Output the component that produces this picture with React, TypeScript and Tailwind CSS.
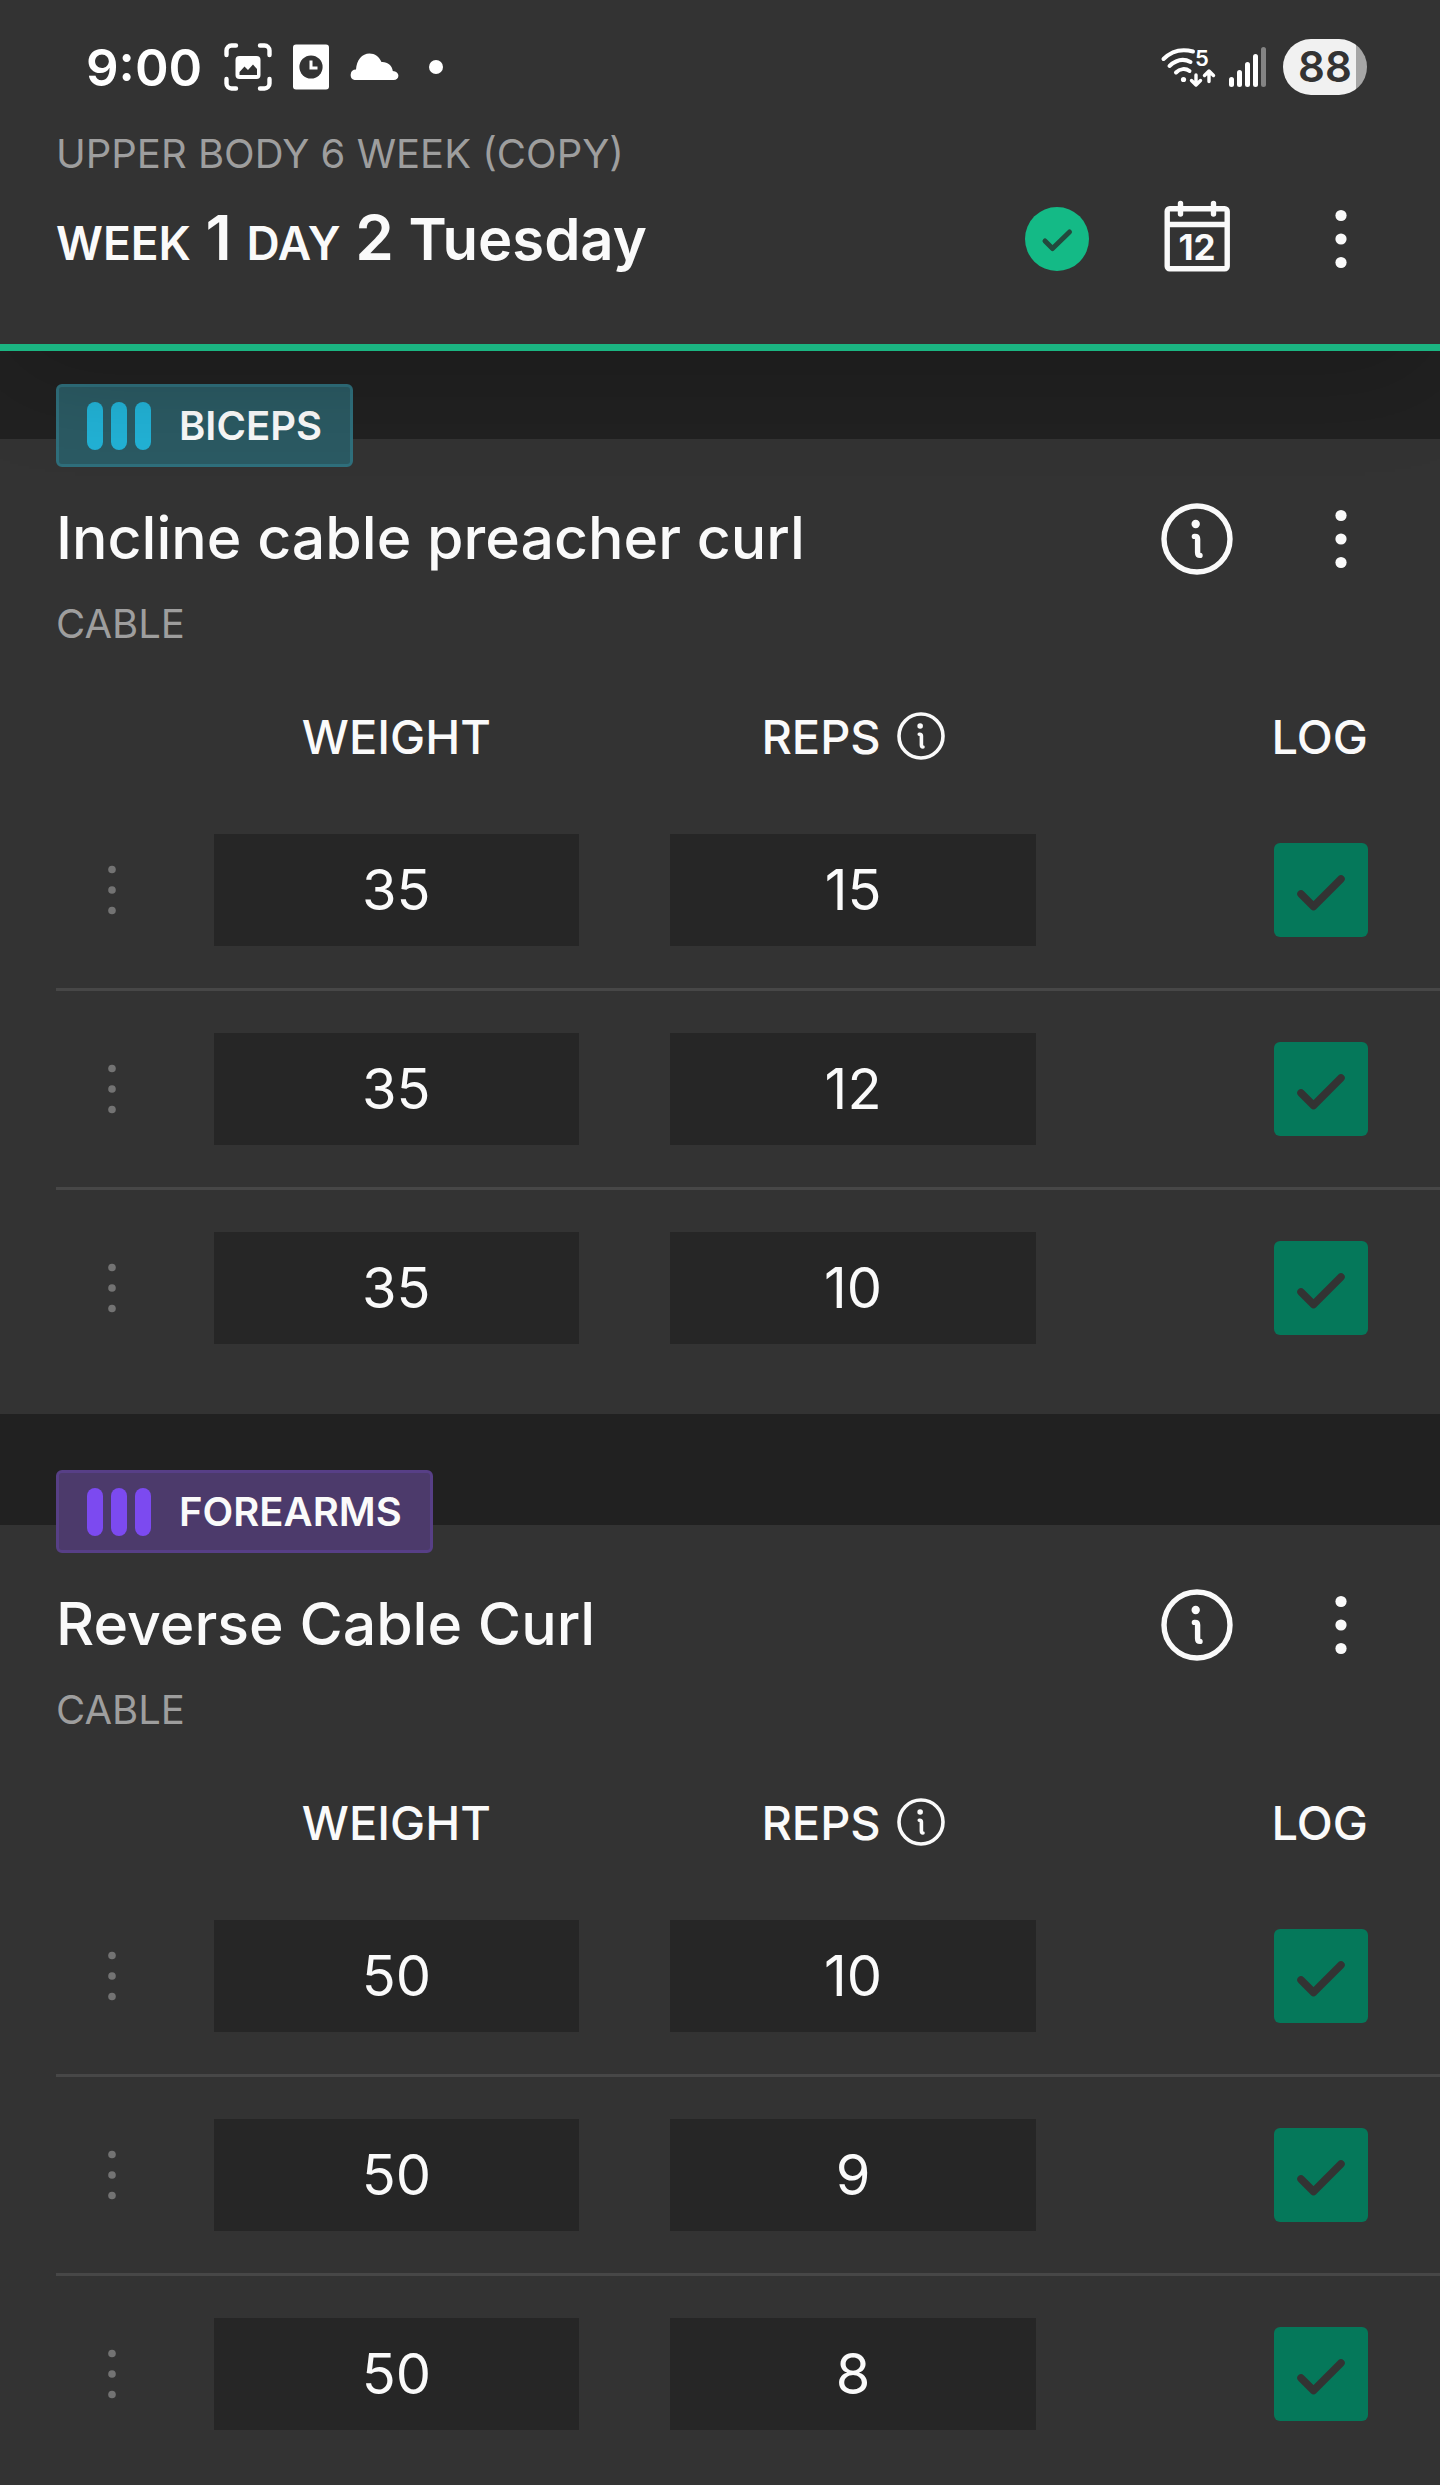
import { useState } from "react";

type SetEntry = { weight: string; reps: string };

type Exercise = {
  muscle: string;
  name: string;
  equipment: string;
  badge: string;
  bar: string;
  sets: SetEntry[];
};

const exercises: Exercise[] = [
  {
    muscle: "Biceps",
    name: "Incline cable preacher curl",
    equipment: "Cable",
    badge: "border-[#2f6f7c] bg-[#2b5a63]",
    bar: "bg-[#22b2d6]",
    sets: [
      { weight: "35", reps: "15" },
      { weight: "35", reps: "12" },
      { weight: "35", reps: "10" },
    ],
  },
  {
    muscle: "Forearms",
    name: "Reverse Cable Curl",
    equipment: "Cable",
    badge: "border-[#573f86] bg-[#4c3a6b]",
    bar: "bg-[#7c4af0]",
    sets: [
      { weight: "50", reps: "10" },
      { weight: "50", reps: "9" },
      { weight: "50", reps: "8" },
    ],
  },
];

const KebabIcon = ({ className = "" }: { className?: string }) => (
  <svg viewBox="0 0 72 72" fill="currentColor" className={className} aria-hidden="true">
    <circle cx="36" cy="12.5" r="5.6" />
    <circle cx="36" cy="36" r="5.6" />
    <circle cx="36" cy="59.5" r="5.6" />
  </svg>
);

const HandleIcon = () => (
  <svg viewBox="0 0 56 56" fill="currentColor" className="size-14" aria-hidden="true">
    <circle cx="28" cy="7.5" r="3.8" />
    <circle cx="28" cy="28" r="3.8" />
    <circle cx="28" cy="48.5" r="3.8" />
  </svg>
);

const InfoIcon = ({ className = "" }: { className?: string }) => (
  <svg viewBox="0 0 72 72" fill="none" stroke="currentColor" strokeLinecap="round" strokeLinejoin="round" className={className} aria-hidden="true">
    <circle cx="36" cy="36" r="33" strokeWidth="5.4" />
    <circle cx="34.7" cy="21" r="4.2" fill="currentColor" stroke="none" />
    <path d="M33.4 33.4h.6c1.6 0 2.6 1 2.6 2.6v13.6c0 1.8 1 2.8 2.4 2.8" strokeWidth="5.4" />
  </svg>
);

const StatusBar = () => (
  <div className="flex h-[134px] items-center justify-between pl-[86px] pr-[73px] text-white">
    <div className="flex items-center">
      <span className="text-[51px] leading-none font-semibold">9:00</span>
      <svg viewBox="0 0 48 48" className="ml-[22px] size-12" fill="none" aria-hidden="true">
        <path
          d="M2.5 12V7.5a5 5 0 0 1 5-5H12M36 2.5h4.5a5 5 0 0 1 5 5V12M45.5 36v4.5a5 5 0 0 1-5 5H36M12 45.5H7.5a5 5 0 0 1-5-5V36"
          stroke="currentColor"
          strokeWidth="4.4"
          strokeLinecap="round"
        />
        <rect x="11.5" y="13" width="25" height="23" rx="4" fill="currentColor" />
        <path d="M15.5 32v-3l5-5.5 3.5 3.5 5-5.5 4 4.5v6z" fill="#333333" />
      </svg>
      <svg viewBox="0 0 36 46" className="ml-[21px] h-[46px] w-9" aria-hidden="true">
        <rect width="36" height="45" y=".5" rx="3" fill="currentColor" />
        <circle cx="18" cy="23" r="11.6" fill="#333333" />
        <path d="M18 16.5V24h6.5" fill="none" stroke="currentColor" strokeWidth="3" />
      </svg>
      <svg viewBox="0 0 50 28" className="ml-5 h-7 w-[50px]" fill="currentColor" aria-hidden="true">
        <path d="M5.5 27a5.3 5.3 0 0 1 1.5-10.4C7.6 7 13 .5 20.5.5c5.4 0 9.8 3.2 12 8.6 6-.4 10.5 3.4 11.3 9 3.4.3 5.6 2.2 5.6 4.7 0 2.6-2 4.2-4.6 4.2z" />
      </svg>
      <span className="ml-[30px] size-[14px] rounded-full bg-white" />
    </div>
    <div className="flex items-center">
      <svg viewBox="0 0 56 42" className="h-[42px] w-14 overflow-visible" fill="none" stroke="currentColor" strokeWidth="4" strokeLinecap="round" strokeLinejoin="round" aria-hidden="true">
        <path d="M2.5 13C11 4.5 22 2.8 32 5.5" />
        <path d="M8.5 20c7-6.5 14.5-7.5 21-4" />
        <path d="M15 26.5c4-4 9.5-4.5 13.5-1.5" />
        <circle cx="22.5" cy="33.5" r="2.6" fill="currentColor" stroke="none" />
        <path d="M35 29v9.5m-4.5-4 4.5 4.5 4.5-4.5M48 35.5V26m-4.5 3.5L48 25l4.5 4.5" strokeWidth="3.4" />
        <text x="34" y="20" fontSize="22" fontWeight="600" fill="currentColor" stroke="none">
          5
        </text>
      </svg>
      <svg viewBox="0 0 38 42" className="ml-3 h-[42px] w-[38px]" fill="currentColor" aria-hidden="true">
        <rect x="0" y="31" width="5" height="10" rx="2.5" />
        <rect x="8" y="24" width="5" height="17" rx="2.5" />
        <rect x="16" y="16" width="5" height="25" rx="2.5" />
        <rect x="24" y="8" width="5" height="33" rx="2.5" />
        <rect x="32" y="1" width="5" height="40" rx="2.5" opacity=".4" />
      </svg>
      <span className="ml-4 flex h-14 w-[84px] items-center justify-center rounded-full bg-linear-to-r from-[#f1f1f1] from-87% to-[#a6a6a6] to-87% text-[42px] leading-none font-semibold text-[#333333]">
        88
      </span>
    </div>
  </div>
);

const Header = () => (
  <header className="relative z-10 border-b-[7px] border-[#1bb582] bg-[#333333] shadow-[0_30px_100px_-10px_rgba(0,0,0,0.2)]">
    <StatusBar />
    <div className="pb-[67px] pl-14 pr-[63px]">
      <p className="text-[40px] leading-[40px] text-[#9e9e9e] uppercase">Upper body 6 week (copy)</p>
      <div className="mt-[26px] flex h-[77px] items-center justify-between">
        <h1 className="pt-1 text-[58px] leading-[77px] font-semibold whitespace-nowrap text-[#fafafa]">
          <span className="text-[46px]">WEEK</span> <span className="text-[62px]">1</span>{" "}
          <span className="text-[46px]">DAY</span> <span className="text-[62px]">2</span> Tuesday
        </h1>
        <div className="flex items-center gap-[72px] text-[#fafafa]">
          <button aria-label="Workout complete" className="size-16 rounded-full bg-[#14ba86]">
            <svg viewBox="0 0 64 64" className="size-16" fill="none" stroke="#234a3d" strokeWidth="5" strokeLinecap="round" strokeLinejoin="round" aria-hidden="true">
              <path d="m20 34 7.5 7.5L44.5 25" />
            </svg>
          </button>
          <button aria-label="Calendar" className="size-[72px]">
            <svg viewBox="0 0 72 72" className="size-[72px] overflow-visible" fill="none" stroke="currentColor" strokeWidth="5.4" strokeLinecap="round" aria-hidden="true">
              <rect x="6.2" y="5.7" width="60" height="60" rx="2.5" />
              <path d="M7 21.5h58M19.5 .5v10.5M52.5 .5v10.5" />
              <text x="36" y="57" textAnchor="middle" fontSize="35" fontWeight="700" fill="currentColor" stroke="none">
                12
              </text>
            </svg>
          </button>
          <button aria-label="Workout menu" className="size-[72px]">
            <KebabIcon className="size-[72px]" />
          </button>
        </div>
      </div>
    </div>
  </header>
);

const LogCheckbox = ({ label }: { label: string }) => {
  const [logged, setLogged] = useState(true);

  return (
    <span className="relative inline-block size-[94px] align-middle">
      <input
        type="checkbox"
        aria-label={label}
        checked={logged}
        onChange={(e) => setLogged(e.target.checked)}
        className="block size-[94px] appearance-none rounded-md bg-[#262626] checked:bg-[#05785a]"
      />
      {logged && (
        <svg viewBox="0 0 94 94" className="pointer-events-none absolute inset-0" fill="none" stroke="#333333" strokeWidth="7.5" strokeLinecap="round" strokeLinejoin="round" aria-hidden="true">
          <path d="m27 51 12.5 12.5L67 36" />
        </svg>
      )}
    </span>
  );
};

const SetInput = ({ label, value }: { label: string; value: string }) => (
  <input
    type="text"
    inputMode="numeric"
    aria-label={label}
    defaultValue={value}
    className="h-[112px] w-4/5 bg-[#262626] text-center align-middle text-[56px] text-[#fafafa]"
  />
);

const ExerciseCard = ({ exercise }: { exercise: Exercise }) => (
  <section className="mt-[111px] bg-[#333333] pb-7 first:mt-[88px] last:grow last:pb-[11px]">
    <div className="px-14">
      <div className={`-mt-[55px] inline-flex h-[83px] items-center rounded-md border-3 px-7 align-top ${exercise.badge}`}>
        <span className="mr-7 flex gap-2">
          <span className={`h-12 w-4 rounded-full ${exercise.bar}`} />
          <span className={`h-12 w-4 rounded-full ${exercise.bar}`} />
          <span className={`h-12 w-4 rounded-full ${exercise.bar}`} />
        </span>
        <span className="text-[40px] leading-none font-semibold text-[#fafafa] uppercase">{exercise.muscle}</span>
      </div>
    </div>

    <div className="mt-9 flex h-[72px] items-center justify-between pl-14 pr-[63px] text-[#fafafa]">
      <h2 className="pb-1 text-[59px] leading-none font-medium">{exercise.name}</h2>
      <div className="flex gap-[72px]">
        <button aria-label={`About ${exercise.name}`} className="size-[72px]">
          <InfoIcon className="size-[72px]" />
        </button>
        <button aria-label={`${exercise.name} menu`} className="size-[72px]">
          <KebabIcon className="size-[72px]" />
        </button>
      </div>
    </div>
    <p className="mt-[25px] px-14 text-[40px] leading-[48px] text-[#9e9e9e] uppercase">{exercise.equipment}</p>

    <div className="mt-8 pl-14">
      <table className="w-full table-fixed border-separate border-spacing-0">
        <thead>
          <tr className="h-[112px] text-[47px] leading-none text-[#fafafa]">
            <th className="w-28" />
            <th className="w-[33%] font-medium">WEIGHT</th>
            <th className="w-[33%] font-medium">
              <span className="flex items-center justify-center gap-4">
                REPS
                <button aria-label="About reps" className="size-12">
                  <InfoIcon className="size-12" />
                </button>
              </span>
            </th>
            <th className="pr-[72px] text-right font-medium">LOG</th>
          </tr>
        </thead>
        <tbody>
          {exercise.sets.map((set, i) => (
            <tr key={i} className="h-[199px] *:border-b-3 *:border-[#474747] last:h-[196px] last:*:border-b-0">
              <td className="p-0 text-center">
                <button aria-label={`Set ${i + 1} menu`} className="align-middle text-[#737373]">
                  <HandleIcon />
                </button>
              </td>
              <td className="p-0 text-center">
                <SetInput label={`Set ${i + 1} weight`} value={set.weight} />
              </td>
              <td className="p-0 text-center">
                <SetInput label={`Set ${i + 1} reps`} value={set.reps} />
              </td>
              <td className="py-0 pr-[72px] pl-0 text-right">
                <LogCheckbox label={`Log set ${i + 1}`} />
              </td>
            </tr>
          ))}
        </tbody>
      </table>
    </div>
  </section>
);

const App = () => (
  <div className="flex min-h-screen flex-col bg-[#212121] font-['Inter','Noto_Sans',sans-serif]">
    <Header />
    <main className="flex grow flex-col">
      {exercises.map((exercise) => (
        <ExerciseCard key={exercise.name} exercise={exercise} />
      ))}
    </main>
  </div>
);

export default App;
